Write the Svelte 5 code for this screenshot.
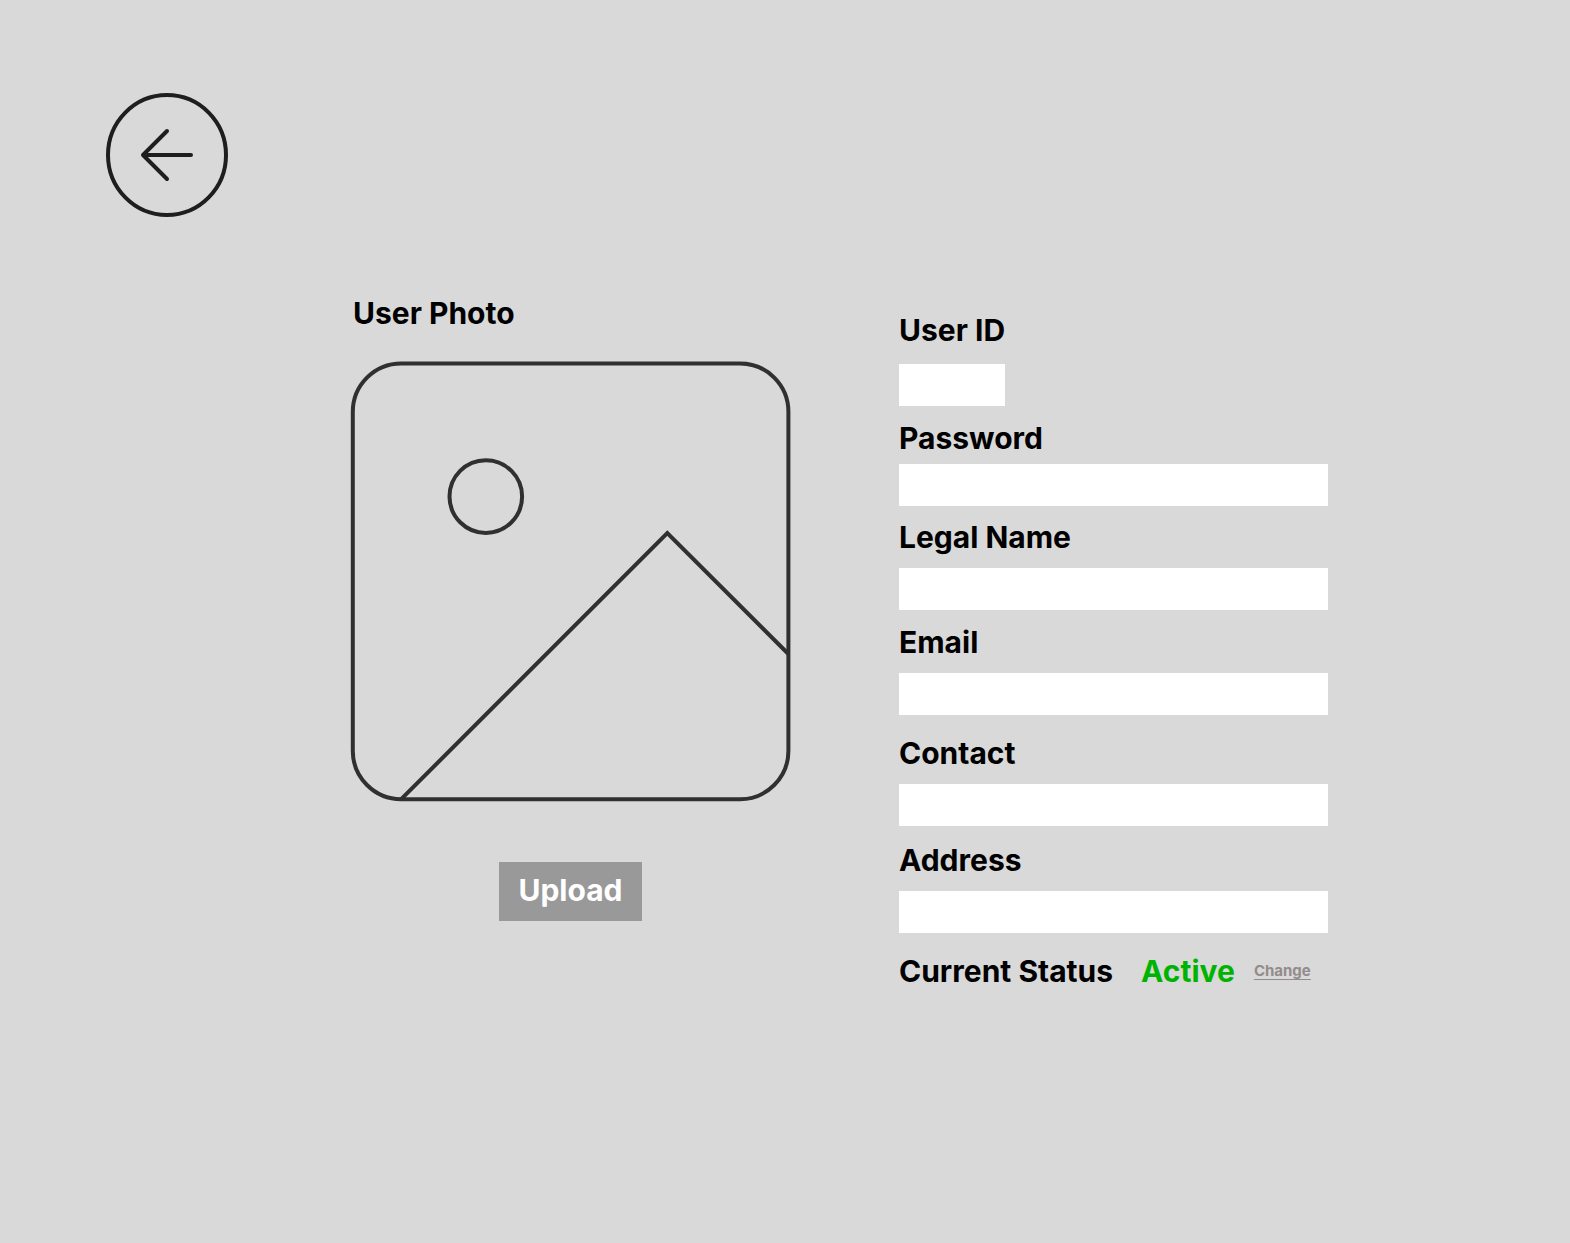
<script>
  const fields = [
    { id: 'user-id', label: 'User ID', type: 'text', size: 'short', gap: 'wide', after: 'close' },
    { id: 'password', label: 'Password', type: 'password', size: 'full', gap: 'tight', after: 'closest' },
    { id: 'legal-name', label: 'Legal Name', type: 'text', size: 'full', gap: 'normal', after: 'close' },
    { id: 'email', label: 'Email', type: 'email', size: 'full', gap: 'normal', after: 'far' },
    { id: 'contact', label: 'Contact', type: 'tel', size: 'full', gap: 'normal', after: 'medium' },
    { id: 'address', label: 'Address', type: 'text', size: 'full', gap: 'normal', after: 'far' }
  ];
</script>

<div class="page">
  <header>
    <button class="back" type="button" aria-label="Back">
      <svg width="122" height="124" viewBox="0 0 122 124" aria-hidden="true">
        <ellipse cx="61" cy="62" rx="59" ry="60" />
        <path d="M85 62H37M61 38L37 62L61 86" />
      </svg>
    </button>
  </header>

  <main>
    <section class="photo">
      <h2>User Photo</h2>
      <svg viewBox="0 0 439 440" role="img" aria-label="Photo placeholder">
        <rect x="1.8" y="2.4" width="435.6" height="435.8" rx="48.4" />
        <circle cx="134.8" cy="135.6" r="36.3" />
        <path d="M437.4 293L316.3 172L50.2 438.2" />
      </svg>
      <button class="upload" type="button">Upload</button>
    </section>

    <form>
      {#each fields as field}
        <div class="field {field.gap} {field.after}">
          <label for={field.id}>{field.label}</label>
          <input class={field.size} id={field.id} type={field.type} />
        </div>
      {/each}
      <div class="status">
        <span>Current Status</span>
        <span class="active">Active</span>
        <a href="#change">Change</a>
      </div>
    </form>
  </main>
</div>

<style>
  :global(body) {
    background: #d9d9d9;
  }

  .page {
    padding: 93px 242px 93px 106px;
    color: #000;
    font: 700 30px/36px Inter, sans-serif;
  }

  header {
    display: flex;
  }

  button {
    border: 0;
    font: inherit;
    cursor: pointer;
  }

  .back {
    padding: 0;
    background: none;
    border-radius: 50%;
  }

  svg {
    display: block;
    overflow: visible;
    fill: none;
    stroke-width: 4;
    stroke-linejoin: round;
  }

  .back svg {
    stroke: #1e1e1e;
    stroke-linecap: round;
  }

  main {
    display: grid;
    grid-template-columns: 439fr 429fr;
    column-gap: 109px;
    align-items: start;
    margin: 78px 0 0 245px;
  }

  .photo {
    display: flex;
    flex-direction: column;
    align-items: center;
  }

  h2 {
    align-self: flex-start;
    margin: 0 0 30px;
    padding-left: 2px;
    font: inherit;
  }

  .photo svg {
    width: 100%;
    stroke: #303030;
    stroke-linejoin: miter;
  }

  .upload {
    margin-top: 61px;
    padding: 10px 19px 13px;
    background: #999;
    color: #fff;
  }

  form {
    display: flex;
    flex-direction: column;
    padding-top: 17px;
  }

  .field {
    display: flex;
    flex-direction: column;
    align-items: flex-start;
    gap: 13px;
  }

  .wide {
    gap: 16px;
  }

  .tight {
    gap: 8px;
  }

  .closest {
    margin-bottom: 13px;
  }

  .close {
    margin-bottom: 14px;
  }

  .medium {
    margin-bottom: 16px;
  }

  .far {
    margin-bottom: 20px;
  }

  input {
    box-sizing: border-box;
    width: 100%;
    height: 42px;
    padding: 0 10px;
    border: 0;
    border-radius: 0;
    background: #fff;
    font: 400 20px/24px Inter, sans-serif;
  }

  .short {
    width: 106px;
  }

  .status {
    display: flex;
    align-items: center;
    white-space: nowrap;
  }

  .active {
    margin: 0 19px 0 28px;
    color: #00b300;
  }

  a {
    color: #948b8b;
    font-size: 15px;
    line-height: 18px;
    text-decoration-thickness: 1px;
    text-underline-offset: 3px;
  }
</style>
